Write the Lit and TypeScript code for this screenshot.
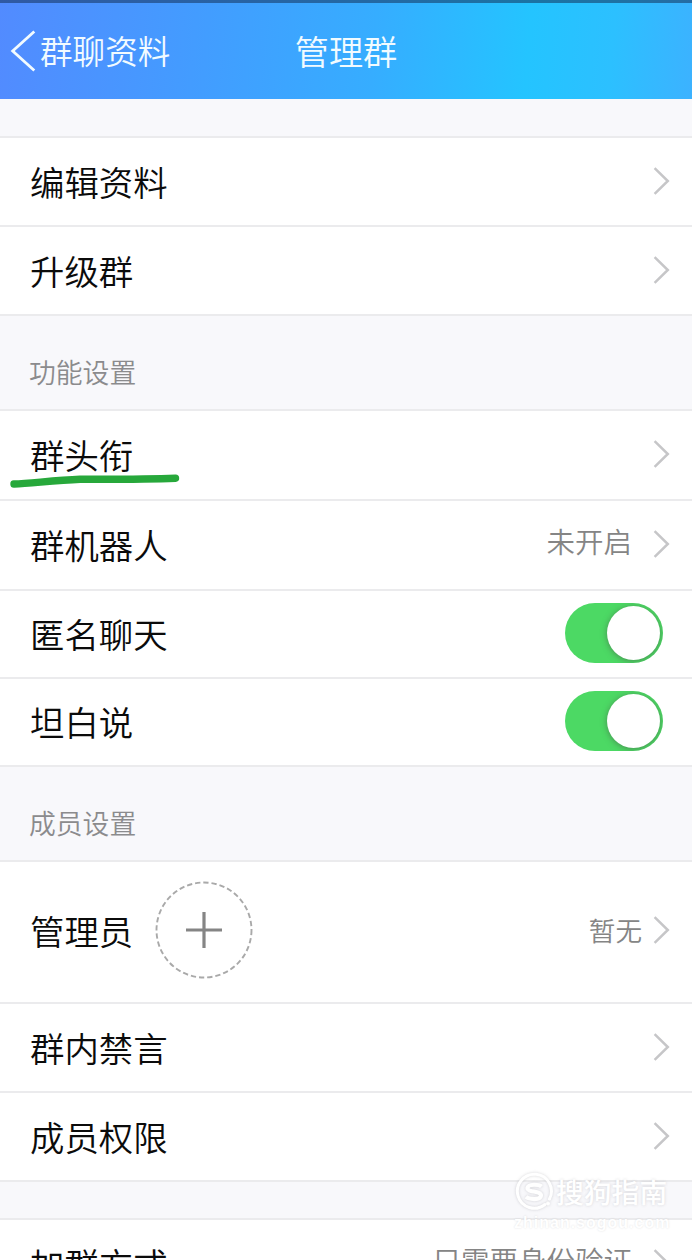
import { LitElement, html, css, nothing } from "lit";
import { customElement, property } from "lit/decorators.js";
import { styleMap } from "lit/directives/style-map.js";

@customElement("chevron-icon")
class ChevronIcon extends LitElement {
  static styles = css`
    :host { display: block; width: 17px; height: 28px; flex: none; }
    .icon { display: block; }
  `;
  render() {
    return html`<svg class="icon" width="17" height="28" viewBox="0 0 17 28" fill="none" stroke="#c6c6c8" stroke-width="2.5">
      <path d="M1.600 1.200 L14.800 14 L1.600 26.800" />
    </svg>`;
  }
}

@customElement("toggle-switch")
class ToggleSwitch extends LitElement {
  static styles = css`
    :host { display: block; flex: none; }
    .track {
      box-sizing: border-box; width: 98px; height: 60px; border-radius: 30px;
      background: #4cd964; padding: 3px; display: flex; justify-content: flex-end;
      overflow: hidden;
    }
    .knob {
      width: 53px; height: 54px; border-radius: 50%; background: #fff;
      box-shadow: 0 1px 6px rgba(70, 90, 70, 0.6);
    }
  `;
  render() {
    return html`<div class="track"><div class="knob"></div></div>`;
  }
}

@customElement("setting-row")
class SettingRow extends LitElement {
  @property() label = "";
  @property() value = "";
  @property() kind = "link";
  @property({ type: Number }) h = 89;
  @property({ type: Boolean }) marked = false;

  static styles = css`
    :host { display: block; }
    .row {
      position: relative; box-sizing: border-box; display: flex; align-items: center;
      border-top: 2px solid #ebebed; background: #fff; padding: 0 22px 2px 30px;
    }
    .row.toggle { padding-right: 29px; padding-bottom: 3px; }
    .row.admin { padding-bottom: 4px; }
    .label { font-size: 34.4px; line-height: 50px; color: #0b0b0b; white-space: nowrap; }
    .fill { flex: 1; }
    .value { font-size: 28.5px; line-height: 40px; color: #858585; margin-right: 21px; padding-bottom: 6px; white-space: nowrap; }
    .value.short { font-size: 26.6px; margin-right: 11px; padding-bottom: 1px; }
    .add { margin-left: 21px; display: block; }
    .mark { position: absolute; left: 0; top: 60px; }
  `;
  render() {
    return html`<div class="row ${this.kind}" style=${styleMap({ height: this.h + "px" })}>
      <div class="label">${this.label}</div>
      ${this.kind === "admin"
        ? html`<svg class="add" width="100" height="100" viewBox="0 0 100 100" fill="none">
            <circle cx="50" cy="50" r="47.500" stroke="#a9a9a9" stroke-width="1.900" stroke-dasharray="5.300 2.950" />
            <path d="M50 32v36M32 50h36" stroke="#858585" stroke-width="3.200" />
          </svg>`
        : nothing}
      <div class="fill"></div>
      ${this.value
        ? html`<div class="value ${this.kind === "admin" ? "short" : ""}">${this.value}</div>`
        : nothing}
      ${this.kind === "toggle"
        ? html`<toggle-switch></toggle-switch>`
        : html`<chevron-icon></chevron-icon>`}
      ${this.marked
        ? html`<svg class="mark" width="190" height="24" viewBox="0 0 190 24" fill="none">
            <path d="M14 13 C32 12 55 9.600 80 8.300 C110 8.200 145 8.400 175.500 7.200" stroke="#27a83b" stroke-width="7.400" stroke-linecap="round" stroke-linejoin="round" />
          </svg>`
        : nothing}
    </div>`;
  }
}

@customElement("app-root")
class AppRoot extends LitElement {
  static styles = css`
    :host {
      display: block; position: relative; width: 692px; height: 1260px; overflow: hidden;
      background: #f8f8fb;
      font-family: "Noto Sans CJK SC", sans-serif; font-weight: 350;
    }
    .header {
      box-sizing: border-box; height: 99px; border-top: 3px solid rgba(20, 50, 90, 0.55);
      background: linear-gradient(95deg, #528bff 0%, #429dff 30%, #36adff 54%, #24c4ff 76%, #2cc0ff 88%, #3cb2ff 100%) border-box;
      display: grid; grid-template-columns: 1fr auto 1fr; align-items: center; color: #f2fbff;
    }
    .back { display: flex; align-items: center; padding-left: 10px; gap: 4px; font-size: 32.6px; line-height: 46px; }
    .back-text { white-space: nowrap; padding-bottom: 3px; }
    .title { font-size: 34.2px; line-height: 48px; padding-bottom: 2px; }
    .gap { height: 37px; }
    .section {
      box-sizing: border-box; height: 95px; border-top: 2px solid #ebebed; padding: 36px 29px 0;
      font-size: 26.8px; line-height: 40px; color: #8b8b8d;
    }
    .spacer { box-sizing: border-box; height: 38px; border-top: 2px solid #ebebed; }
    .watermark { position: absolute; left: 514px; top: 1171px; width: 160px; color: #fff; }
    .brand { display: flex; align-items: center; gap: 2px; height: 42px; }
    .logo { display: block; filter: drop-shadow(0 0 1.5px rgba(90, 90, 100, 0.25)); }
    .brand-text { font-size: 27.800px; line-height: 38px; padding-bottom: 3px; font-weight: 500; text-shadow: 0 0 3px rgba(90, 90, 100, 0.24); white-space: nowrap; }
    .site { font: 700 16px/20px "Liberation Sans", sans-serif; letter-spacing: 1px; text-shadow: 0 0 2px rgba(90, 90, 100, 0.2); white-space: nowrap; }
  `;
  render() {
    return html`
      <div class="header">
        <div class="back">
          <svg width="26" height="44" viewBox="0 0 26 44" fill="none" stroke="#f2fbff" stroke-width="2.800">
            <path d="M24.300 2.500 L2.700 22 L24.300 41.500" />
          </svg>
          <span class="back-text">群聊资料</span>
        </div>
        <div class="title">管理群</div>
        <div></div>
      </div>
      <div class="gap"></div>
      <setting-row label="编辑资料" .h=${89}></setting-row>
      <setting-row label="升级群" .h=${89}></setting-row>
      <div class="section">功能设置</div>
      <setting-row label="群头衔" .h=${90} marked></setting-row>
      <setting-row label="群机器人" value="未开启" .h=${90}></setting-row>
      <setting-row label="匿名聊天" kind="toggle" .h=${88}></setting-row>
      <setting-row label="坦白说" kind="toggle" .h=${88}></setting-row>
      <div class="section">成员设置</div>
      <setting-row label="管理员" value="暂无" kind="admin" .h=${142}></setting-row>
      <setting-row label="群内禁言" .h=${89}></setting-row>
      <setting-row label="成员权限" .h=${89}></setting-row>
      <div class="spacer"></div>
      <setting-row label="加群方式" value="只需要身份验证" .h=${89}></setting-row>
      <div class="watermark">
        <div class="brand">
          <svg class="logo" width="40" height="40" viewBox="0 0 40 40" fill="none" stroke="#fff">
            <path d="M31 32.500 A17 17 0 1 1 35.500 27" stroke-width="3" stroke-linecap="round" />
            <path d="M27.500 14.500 C25 12.300 14 11.500 13.500 16 C13.200 20.500 27 18.500 27 23.500 C26.500 28.500 15 27.500 12 24.800" stroke-width="4.200" />
            <circle cx="34" cy="31.500" r="1.500" fill="#fff" />
          </svg>
          <span class="brand-text">搜狗指南</span>
        </div>
        <div class="site">zhinan.sogou.com</div>
      </div>
    `;
  }
}
